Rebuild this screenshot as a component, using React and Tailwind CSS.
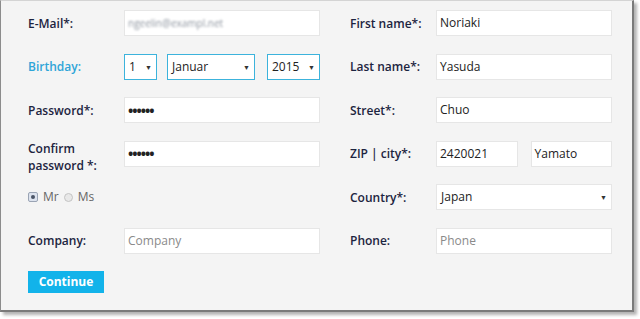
const font = { fontFamily: '"Open Sans", "Noto Sans", sans-serif' }

function Label({ children, className = '' }) {
  return <div className={`text-[12px] font-semibold text-[#1c2440] leading-[15px] ${className}`}>{children}</div>
}

function Input({ value, placeholder, className = '' }) {
  return (
    <div className={`h-[26px] bg-white border border-[#e6e6e6] flex items-center px-[3px] text-[12px] ${className}`}>
      {value ? <span className="text-[#222]">{value}</span> : <span className="text-[#8a8a8a]">{placeholder}</span>}
    </div>
  )
}

function Select({ value, active, className = '' }) {
  return (
    <div className={`h-[26px] bg-white border flex items-center justify-between pl-[4px] pr-[4px] text-[12px] text-[#222] ${active ? 'border-[#3cb3dc]' : 'border-[#e6e6e6]'} ${className}`}>
      <span>{value}</span>
      <span className="text-[7px] text-[#333] leading-none">▼</span>
    </div>
  )
}

function Row({ label, children, labelW, labelClass = '' }) {
  return (
    <div className="flex items-center h-[26px]">
      <div className={`${labelW} shrink-0`}><Label className={labelClass}>{label}</Label></div>
      {children}
    </div>
  )
}

const dots = <span className="tracking-[-1px] text-[14px] font-bold">••••••</span>

export default function App() {
  return (
    <div className="w-[640px] h-[319px] bg-white" style={font}>
      <div className="w-[634px] h-[312px] bg-[#f4f4f4] border-l border-l-[#8c8c8c] border-t border-t-[#d4d4d4] border-r-2 border-r-[#7a7a7a] border-b-2 border-b-[#7a7a7a] shadow-[3px_3px_3px_rgba(0,0,0,0.3)] pt-[9px] pl-[27px] flex gap-[30px]">
        <div className="w-[292px] flex flex-col gap-[17.6px]">
          <Row label="E-Mail*:" labelW="w-[96px]">
            <div className="h-[26px] flex-1 bg-white border border-[#e6e6e6] flex items-center px-[3px] text-[10px]">
              <span className="text-[#8f96a0] blur-[1.3px]">ngeelin@exampl.net</span>
            </div>
          </Row>
          <Row label="Birthday:" labelW="w-[96px]" labelClass="!text-[#2fa5d8]">
            <div className="flex flex-1 items-center mt-[1px]">
              <Select value="1" active className="w-[33px]" />
              <Select value="Januar" active className="w-[88px] ml-[10px]" />
              <Select value="2015" active className="w-[53px] ml-[12px]" />
            </div>
          </Row>
          <Row label="Password*:" labelW="w-[96px]">
            <Input value={dots} className="flex-1" />
          </Row>
          <Row label={<>Confirm<br />password *:</>} labelW="w-[96px]" labelClass="mt-[6px] !leading-[17px]">
            <Input value={dots} className="flex-1" />
          </Row>
          <div className="flex items-center h-[26px] text-[12px] text-[#666]">
            <span className="w-[10px] h-[10px] rounded-[2px] border border-[#9aa4b4] bg-[#dde3ee] flex items-center justify-center">
              <span className="w-[4px] h-[4px] rounded-full bg-[#4a5466]" />
            </span>
            <span className="ml-[5px]">Mr</span>
            <span className="ml-[5px] w-[9px] h-[9px] rounded-full border border-[#c4c4c4] bg-[#e8e8e8]" />
            <span className="ml-[5px]">Ms</span>
          </div>
          <Row label="Company:" labelW="w-[96px]">
            <Input placeholder="Company" className="flex-1" />
          </Row>
          <div className="-mt-[0.6px]">
            <div className="w-[76px] h-[22px] bg-[#12b3ea] text-white text-[12px] font-bold flex items-center justify-center">Continue</div>
          </div>
        </div>
        <div className="w-[262px] flex flex-col gap-[17.6px]">
          <Row label="First name*:" labelW="w-[86px]">
            <Input value="Noriaki" className="flex-1" />
          </Row>
          <Row label="Last name*:" labelW="w-[86px]">
            <Input value="Yasuda" className="flex-1 mt-[1px]" />
          </Row>
          <Row label="Street*:" labelW="w-[86px]">
            <Input value="Chuo" className="flex-1" />
          </Row>
          <Row label="ZIP | city*:" labelW="w-[86px]">
            <Input value="2420021" className="w-[82px]" />
            <Input value="Yamato" className="w-[82px] ml-[13px]" />
          </Row>
          <Row label="Country*:" labelW="w-[86px]">
            <Select value="Japan" className="flex-1" />
          </Row>
          <Row label="Phone:" labelW="w-[86px]">
            <Input placeholder="Phone" className="flex-1" />
          </Row>
        </div>
      </div>
    </div>
  )
}
